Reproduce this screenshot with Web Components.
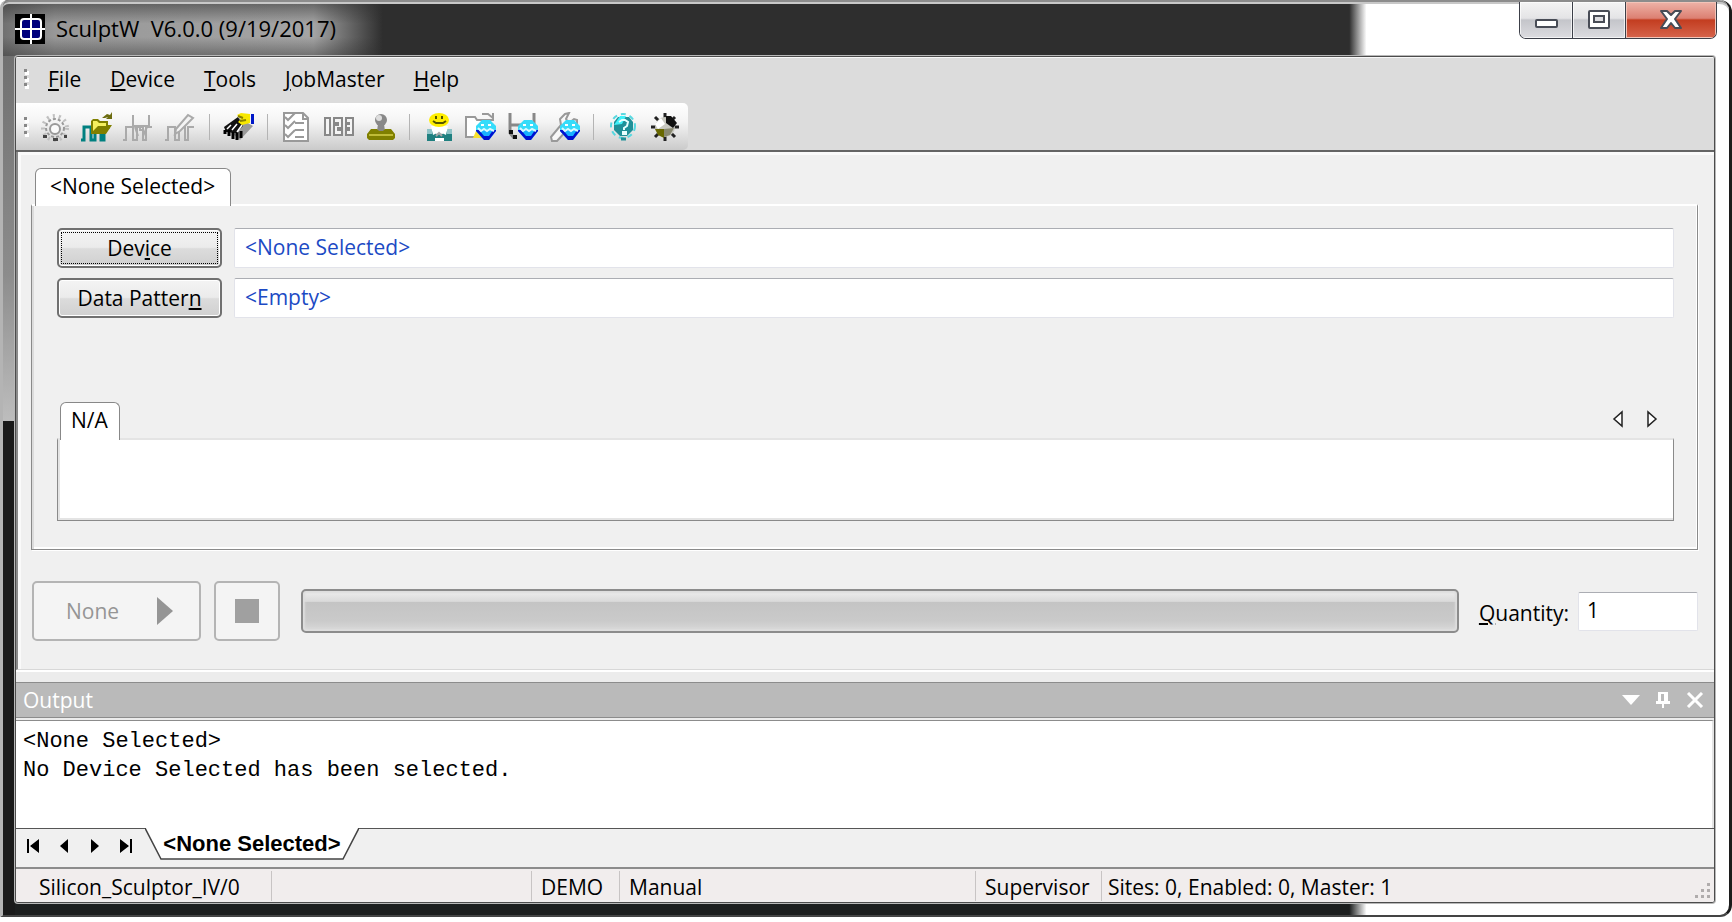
<!DOCTYPE html>
<html lang="en">
<head>
<meta charset="utf-8">
<title>SculptW</title>
<style>
	body {
		margin: 0;
		background: #fff;
		color: #000;
		font: 21px/28px "Open Sans", "Noto Sans", sans-serif;
	}
</style>
</head>
<body>

<template id="app-window-template">
	<style>
		:host {
			box-sizing: border-box;
			display: flex;
			flex-direction: column;
			min-height: calc(100vh - 5px);
			border-left: 3px solid #b4b4b4;
			border-right: 3px solid #1c1c1c;
			border-bottom: 2px solid #444;
			border-radius: 8px 12px 12px 0;
			background:
				linear-gradient(180deg, #6a6a6a, #8c8c8c 30%, #bdbdbd 46%, #1a1a1a 46%) 0 0 / 12px 100% no-repeat,
				linear-gradient(90deg, #1c1e1e 78%, #fff 79%);
		}
		.client {
			flex: 1;
			display: flex;
			flex-direction: column;
			margin: 0 14px 12px 12px;
			border: 1px solid #4c4c4c;
			border-radius: 3px;
			box-shadow: 0 0 0 1px #b8b8b8;
			background: #f0f0f0;
			overflow: hidden;
		}
	</style>
	<slot name="title"></slot>
	<div class="client"><slot></slot></div>
</template>

<template id="title-bar-template">
	<style>
		:host {
			display: flex;
			align-items: flex-start;
			height: 56px;
			box-sizing: border-box;
			padding: 0 12px;
			border-top: 2px solid #8c8c8c;
			border-radius: 6px 10px 0 0;
			box-shadow: inset 0 2px #c8c8c8;
			font-size: 22px;
			background:
				linear-gradient(180deg, #2e2e2e90, transparent 40%, transparent 65%, #2e2e2e70) 0 0 / 380px 100% no-repeat,
				linear-gradient(90deg, #707070, #989898 3%, #a4a4a4 18%, #2e2e2e 22%, #2e2e2e 78%, #fff 79%);
		}
		.logo {
			margin: 12px 11px 0 0;
		}
		h1 {
			flex: 1;
			margin: 10px 0 0;
			font: inherit;
			line-height: 32px;
			white-space: pre;
		}
		.controls {
			display: flex;
			height: 36px;
			border: 1px solid #3c3f48;
			border-top: 0;
			border-radius: 0 0 7px 7px;
			overflow: hidden;
		}
		button {
			display: grid;
			place-items: center;
			width: 53px;
			padding: 0;
			border: 0;
			border-right: 1px solid #3c3f48;
			background: linear-gradient(#f4f4f4, #e4e4e6 45%, #c4c5ca 50%, #dcdce0);
			box-shadow: inset 0 0 0 1px #ffffffb0;
		}
		.close {
			width: 90px;
			border-right: 0;
			background: linear-gradient(#eeb3a8, #dc8072 45%, #c33d20 50%, #d6644c);
			box-shadow: inset 0 0 0 1px #f3c4b8;
		}
	</style>
	<svg class="logo" width="30" height="30" viewBox="0 0 30 30" aria-hidden="true">
		<path fill="#000" d="M0 0h30v30H0z"/>
		<rect x="6" y="5" width="20" height="20" rx="3" fill="#00007c" stroke="#fff" stroke-width="2"/>
		<path stroke="#fff" stroke-width="2" d="M16 0v30M0 15h30"/>
	</svg>
	<h1><slot></slot></h1>
	<div class="controls">
		<button aria-label="Minimize"><svg width="26" height="26"><rect x="3" y="13" width="21" height="7" rx="1" fill="#fff" stroke="#484c56" stroke-width="2"/></svg></button>
		<button aria-label="Maximize"><svg width="26" height="26"><rect x="3" y="4" width="20" height="17" rx="1" fill="#fff" stroke="#484c56" stroke-width="2"/><rect x="8" y="9" width="10" height="6" fill="#dcdce0" stroke="#484c56" stroke-width="2"/></svg></button>
		<button class="close" aria-label="Close"><svg width="26" height="26"><path d="M3 4h6l4 4 4-4h6l-6 8 6 9h-6l-4-5-4 5H3l6-9z" fill="#fff" stroke="#484c56" stroke-width="2" stroke-linejoin="round"/></svg></button>
	</div>
</template>

<template id="menu-bar-template">
	<style>
		:host {
			display: block;
			background: #dcdcdc;
			border-top: 1px solid #f8f8f8;
		}
		nav {
			box-sizing: border-box;
			display: flex;
			align-items: center;
			height: 45px;
			padding: 0 0 4px 7px;
		}
		.grip {
			margin-right: 5px;
		}
		::slotted(a) {
			padding: 4px 15px 4px 14px;
			color: #000;
			text-decoration: none;
		}
	</style>
	<nav>
		<svg class="grip" width="6" height="22" aria-hidden="true"><path d="M2 3h4v4H2zM2 10h4v4H2zM2 17h4v4H2z" fill="#fff"/><path d="M1 1h3v3H1zM1 8h3v3H1zM1 15h3v3H1z" fill="#888"/></svg>
		<slot></slot>
	</nav>
</template>

<template id="tool-bar-template">
	<style>
		:host {
			display: flex;
			background: #dcdcdc;
			border-bottom: 2px solid #646464;
		}
		.band {
			display: flex;
			align-items: center;
			height: 47px;
			padding: 0 2px 0 7px;
			border-radius: 0 5px 5px 0;
			background: linear-gradient(#fff, #f4f4f4 40%, #cacaca);
		}
		.grip {
			margin-right: 5px;
		}
	</style>
	<div class="band" role="toolbar">
		<svg class="grip" width="6" height="22" aria-hidden="true"><path d="M2 3h4v4H2zM2 10h4v4H2zM2 17h4v4H2z" fill="#fff"/><path d="M1 1h3v3H1zM1 8h3v3H1zM1 15h3v3H1z" fill="#888"/></svg>
		<slot></slot>
	</div>
</template>

<template id="tool-button-template">
	<style>
		:host {
			display: block;
		}
		button {
			display: grid;
			place-items: center;
			width: 42px;
			height: 40px;
			padding: 0;
			border: 0;
			background: none;
		}
	</style>
	<button></button>
</template>

<template id="tool-separator-template">
	<style>
		:host {
			width: 1px;
			height: 26px;
			margin: 0 8px 0 7px;
			background: #b4b4b4;
		}
	</style>
</template>

<template id="tab-panel-template">
	<style>
		:host {
			display: block;
			--fill: #f0f0f0;
		}
		:host([plain]) {
			--fill: #fff;
		}
		header {
			display: flex;
			align-items: center;
			justify-content: space-between;
			padding: 0 5px 0 4px;
		}
		button {
			position: relative;
			height: 38px;
			margin-bottom: -2px;
			padding: 0 15px 4px 14px;
			border: 1px solid #888;
			border-bottom: 0;
			border-radius: 6px 6px 0 0;
			background: #fff;
			color: #000;
			font: inherit;
			white-space: nowrap;
		}
		:host([plain]) header {
			padding-left: 3px;
		}
		:host([plain]) button {
			padding: 0 11px 4px 10px;
		}
		section {
			border: 1px solid #8a8a8a;
			border-top: 2px solid #fff;
			box-shadow: inset 2px 0 #dcdcdc, inset -1px -2px #fff, 1px 1px #fff;
			background: var(--fill);
			padding: 22px 23px 28px 25px;
		}
		:host([plain]) section {
			min-height: 80px;
			padding: 0;
			border-top-color: #e4e4e4;
			box-shadow: inset 2px -2px #e4e4e4;
		}
	</style>
	<header role="tablist">
		<button role="tab" aria-selected="true"></button>
		<slot name="actions"></slot>
	</header>
	<section role="tabpanel"><slot></slot></section>
</template>

<template id="picker-row-template">
	<style>
		:host {
			display: flex;
			gap: 12px;
			margin-bottom: 10px;
		}
		button {
			width: 165px;
			height: 40px;
			padding: 2px;
			border: 2px solid #707070;
			border-radius: 5px;
			background: linear-gradient(#f4f4f4, #ebebeb 48%, #dcdcdc 52%, #d0d0d0);
			box-shadow: inset 0 0 0 1px #fff;
			color: #000;
			font: inherit;
		}
		span {
			display: block;
			line-height: 30px;
			border: 1px solid transparent;
		}
		:host([focused]) span {
			border: 1px dotted #000;
		}
		input {
			flex: 1;
			min-width: 0;
			padding: 0 10px 3px;
			border: 1px solid #e2e3ea;
			border-top-color: #abadb3;
			border-radius: 2px;
			background: #fff;
			color: #1c4ac4;
			font: inherit;
		}
	</style>
	<button id="pick"><span><slot></slot></span></button>
	<input aria-labelledby="pick" readonly>
</template>

<template id="tab-scroller-template">
	<style>
		:host {
			display: flex;
		}
		button {
			width: 34px;
			height: 30px;
			padding: 0;
			border: 0;
			background: none;
		}
	</style>
	<button aria-label="Scroll left"><svg width="12" height="18"><path d="M10 2v14L2 9z" fill="#fff" stroke="#222" stroke-width="1.5"/></svg></button>
	<button aria-label="Scroll right"><svg width="12" height="18"><path d="M2 2v14l8-7z" fill="#fff" stroke="#222" stroke-width="1.5"/></svg></button>
</template>

<template id="run-controls-template">
	<style>
		:host {
			display: flex;
			align-items: center;
			margin: 31px 0 28px 1px;
		}
		button {
			display: flex;
			align-items: center;
			justify-content: center;
			height: 60px;
			padding: 0;
			border: 2px solid #b4b4b4;
			border-radius: 5px;
			background: #f4f4f4;
			color: #959595;
			font: inherit;
		}
		.run {
			width: 169px;
			gap: 38px;
			padding-left: 6px;
		}
		.stop {
			width: 66px;
			margin: 0 21px 0 13px;
		}
		.meter {
			flex: 1;
			box-sizing: border-box;
			height: 44px;
			border: 2px solid #8c8c8c;
			border-radius: 5px;
			background: linear-gradient(#eeeeee, #dadada 26%, #c4c4c4 28%, #cacaca 75%, #dadada);
			box-shadow: inset 0 0 2px 2px #dedede;
		}
		label {
			margin: 4px 9px 0 20px;
		}
		input {
			box-sizing: border-box;
			width: 120px;
			height: 39px;
			padding: 0 8px 3px;
			border: 1px solid #e2e3ea;
			border-top-color: #abadb3;
			border-radius: 2px;
			background: #fff;
			color: #000;
			font: inherit;
		}
	</style>
	<button class="run" disabled>None <svg width="16" height="28" aria-hidden="true"><path d="M0 0l16 14L0 28z" fill="#959595"/></svg></button>
	<button class="stop" aria-label="Stop" disabled><svg width="24" height="24"><path d="M0 0h24v24H0z" fill="#a0a0a0"/></svg></button>
	<div class="meter" role="progressbar" aria-label="Progress" aria-valuenow="0"></div>
	<label for="quantity"><u>Q</u>uantity:</label>
	<input id="quantity" value="1">
</template>

<template id="output-pane-template">
	<style>
		:host {
			flex: 1;
			display: flex;
			flex-direction: column;
			border-top: 2px solid #fff;
			padding-top: 10px;
			background: #ececec;
		}
		header {
			display: flex;
			align-items: center;
			height: 34px;
			padding: 0 3px 0 7px;
			border-top: 1px solid #8c8c8c;
			border-bottom: 1px solid #8c8c8c;
			background: #bababa;
			color: #fff;
		}
		h2 {
			flex: 1;
			margin: 0;
			font: inherit;
		}
		button {
			display: grid;
			place-items: center;
			width: 32px;
			height: 30px;
			padding: 0;
			border: 0;
			background: none;
			color: inherit;
		}
		pre {
			flex: 1;
			margin: 2px 0 0;
			padding: 6px 7px 9px;
			border-top: 1px solid #8c8c8c;
			border-right: 2px solid #e4e4e4;
			background: #fff;
			font: 22px/29px "Liberation Mono", monospace;
		}
		.sheets {
			display: flex;
			height: 39px;
			padding-left: 1px;
			background: linear-gradient(#555, #555) 0 0 / 100% 1px no-repeat, #f0f0f0;
		}
		.sheets button {
			width: 31px;
			height: 36px;
			color: #000;
		}
		.sheet {
			display: grid;
			width: 214px;
			margin-left: 4px;
		}
		.sheet svg, .sheet button {
			grid-area: 1 / 1;
		}
		.sheet button {
			width: 100%;
			height: 32px;
			padding-bottom: 1px;
			font: bold 22px/28px "Liberation Sans", sans-serif;
			white-space: nowrap;
		}
	</style>
	<header>
		<h2>Output</h2>
		<button aria-label="Window position"><svg width="18" height="10"><path d="M0 0h18L9 10z" fill="currentColor"/></svg></button>
		<button aria-label="Auto hide"><svg width="14" height="16"><path d="M2 0h10v9h2v3H8v4H6v-4H0V9h2zM5 2v7h3V2z" fill="currentColor" fill-rule="evenodd"/></svg></button>
		<button aria-label="Close output"><svg width="18" height="16"><path d="M2 1l14 14M16 1L2 15" stroke="currentColor" stroke-width="3"/></svg></button>
	</header>
	<pre><slot></slot></pre>
	<div class="sheets">
		<button aria-label="First sheet"><svg width="14" height="14"><path d="M1 0h2v14H1zM13 0v14L4 7z"/></svg></button>
		<button aria-label="Previous sheet"><svg width="14" height="14"><path d="M11 0v14L3 7z"/></svg></button>
		<button aria-label="Next sheet"><svg width="14" height="14"><path d="M3 0v14l8-7z"/></svg></button>
		<button aria-label="Last sheet"><svg width="14" height="14"><path d="M11 0h2v14h-2zM1 0v14l9-7z"/></svg></button>
		<div class="sheet">
			<svg width="214" height="32" aria-hidden="true"><path d="M0 0l16 31h182L214 0z" fill="#fff"/><path d="M0 0l16 31h182L214 0" fill="none" stroke="#444" stroke-width="1.5"/></svg>
			<button>&lt;None Selected&gt;</button>
		</div>
	</div>
</template>

<template id="status-bar-template">
	<style>
		:host {
			display: flex;
			align-items: center;
			height: 33px;
			border-top: 2px solid #8c8c8c;
			background: #f1eded;
		}
		slot {
			flex: 1;
			display: grid;
			grid-template-columns: 256px 260px 88px 356px 126px 1fr;
		}
		::slotted(span) {
			height: 30px;
			line-height: 32px;
			padding-left: 9px;
			border-right: 1px solid #c8c4c4;
			white-space: nowrap;
		}
		::slotted(:first-child) {
			padding-left: 23px;
		}
		::slotted(:last-child) {
			padding-left: 6px;
			border-right: 0;
		}
		svg {
			align-self: flex-end;
			margin: 0 3px 3px 0;
		}
	</style>
	<slot></slot>
	<svg width="16" height="16" aria-hidden="true"><path d="M12 0h3v3h-3zM12 6h3v3h-3zM6 6h3v3H6zM12 12h3v3h-3zM6 12h3v3H6zM0 12h3v3H0z" fill="#b0acac"/></svg>
</template>

<app-window>
	<title-bar slot="title">SculptW  V6.0.0 (9/19/2017)</title-bar>
	<menu-bar>
		<a href="#file"><u>F</u>ile</a>
		<a href="#device"><u>D</u>evice</a>
		<a href="#tools"><u>T</u>ools</a>
		<a href="#jobmaster"><u>J</u>obMaster</a>
		<a href="#help"><u>H</u>elp</a>
	</menu-bar>
	<tool-bar>
		<tool-button icon="gear" label="Configure"></tool-button>
		<tool-button icon="load" label="Load pattern"></tool-button>
		<tool-button icon="save" label="Save pattern"></tool-button>
		<tool-button icon="edit" label="Edit pattern"></tool-button>
		<tool-separator></tool-separator>
		<tool-button icon="chip" label="Select device"></tool-button>
		<tool-separator></tool-separator>
		<tool-button icon="list" label="Checklist"></tool-button>
		<tool-button icon="serial" label="Serialize"></tool-button>
		<tool-button icon="stamp" label="Stamp"></tool-button>
		<tool-separator></tool-separator>
		<tool-button icon="operator" label="Operator"></tool-button>
		<tool-button icon="jobopen" label="Open job"></tool-button>
		<tool-button icon="jobsave" label="Save job"></tool-button>
		<tool-button icon="jobtool" label="Job tools"></tool-button>
		<tool-separator></tool-separator>
		<tool-button icon="help" label="Help"></tool-button>
		<tool-button icon="about" label="About"></tool-button>
	</tool-bar>
	<main-pane>
		<tab-panel label="&lt;None Selected&gt;">
			<picker-row value="&lt;None Selected&gt;" focused>Dev<u>i</u>ce</picker-row>
			<picker-row value="&lt;Empty&gt;">Data Patter<u>n</u></picker-row>
			<site-area>
				<tab-panel label="N/A" plain>
					<tab-scroller slot="actions"></tab-scroller>
				</tab-panel>
			</site-area>
		</tab-panel>
		<run-controls></run-controls>
	</main-pane>
	<output-pane>&lt;None Selected&gt;
No Device Selected has been selected.</output-pane>
	<status-bar>
		<span>Silicon_Sculptor_IV/0</span>
		<span></span>
		<span>DEMO</span>
		<span>Manual</span>
		<span>Supervisor</span>
		<span>Sites: 0, Enabled: 0, Master: 1</span>
	</status-bar>
</app-window>

<script>
	'use strict';

	// Square wave shared by the pattern buttons
	const WAVE = 'M0 28H3V15H10V28H14V15H20V28H23V15H29';
	// Round blue badge shared by the job buttons
	const BADGE = '<path d="M17 8h8l6 6v5l-7 9h-5l-8-9v-5z" fill="#35dcfa"/><path d="M11 18h20v1l-7 9h-5l-8-9z" fill="#0010d0"/><path d="M14 18h14l-4 6h-5z" fill="#18b0ff"/><path d="M13 16l3 3 3-2 3 2 3-2 4 2" fill="none" stroke="#d8faff" stroke-width="2"/><path d="M16 13h3M23 13h3" stroke="#fff" stroke-width="2"/>';

	const ICONS = {
		gear: '<circle cx="16" cy="16" r="12" fill="none" stroke="#c0c0c0" stroke-width="4" stroke-dasharray="2 4"/><circle cx="16" cy="16" r="9" fill="none" stroke="#999" stroke-width="2" stroke-dasharray="3 2"/><circle cx="16" cy="17" r="5" fill="#fafafa" stroke="#999" stroke-width="2"/><path d="M4 23h4v3H4zM14 26h5v3h-5zM25 23h3v3h-3z" fill="#444"/>',
		load: `<path d="${WAVE}" fill="none" stroke="#008080" stroke-width="3"/><path d="M10 9l2-2h5l2 2h8v4h4l-6 9H10z" fill="#808000"/><path d="M12 9h4l2 2h7v3h-8l-5 5z" fill="#f4f060"/><path d="M21 6l5-4 3 1 2-3v7h-6l2-2-3 1z" fill="#6c6c10"/>`,
		save: `<path d="${WAVE}" fill="none" stroke="#aaa" stroke-width="2"/><path d="M10 3v11h16V3M12 15l3 9M24 15l-4 9M17 14v4h4" fill="none" stroke="#aaa" stroke-width="2"/>`,
		edit: `<path d="${WAVE}" fill="none" stroke="#aaa" stroke-width="2"/><path d="M11 17L23 3l5 3-13 13-5 3z" fill="#f4f4f4" stroke="#aaa" stroke-width="2"/>`,
		chip: '<path d="M4 17L16 6l14 8-13 14z" fill="#999"/><path d="M1 15L15 5l5 9-7 7-10-1z" fill="#111"/><path d="M2 18v4M6 18v6M10 20v7M14 20v8M18 19v7" stroke="#000" stroke-width="3"/><path d="M4 17l4-4M9 18l5-6M14 20l5-7" stroke="#fff" stroke-width="1.5"/><path d="M14 3l4-2 9 1v9l-8 2-4-3 3-3z" fill="#f8e800"/><path d="M15 4l5 2M17 9l6-1" stroke="#8a8200" stroke-width="2"/><path d="M28 2h3v10h-3z" fill="#0018c8"/>',
		list: '<path d="M3 1h19l5 5v23H3z" fill="#fff" stroke="#999" stroke-width="2"/><path d="M22 1v6h5" fill="none" stroke="#999" stroke-width="2"/><path d="M4 5l3 3 7-7M4 13l3 3 7-7M4 22l3 3 7-7" fill="none" stroke="#999" stroke-width="2"/><path d="M14 11h9M14 18h9M14 25h9" stroke="#999" stroke-width="2"/>',
		serial: '<path d="M2 6h5v17H2zM11 6h8v10h-4v2h4v5h-8V13h4v-2h-4zM23 6h7v17h-7v-5h3v-2h-3v-4h3v-1h-3z" fill="#f4f4f4" stroke="#888" stroke-width="2"/>',
		stamp: '<path d="M13 12h6l1 7h-8z" fill="#888"/><circle cx="16" cy="8" r="6" fill="#888"/><circle cx="14" cy="6" r="3" fill="#ddd"/><path d="M6 17h6l2 2h4l2-2h6l4 5v4l-2 2H4l-2-2v-4z" fill="#808000"/><path d="M4 23h24" stroke="#c0bc38" stroke-width="2"/>',
		operator: '<path d="M4 17h6l3 5h7l3-5h6v12H4z" fill="#208080"/><path d="M4 17h5v5H4zM24 17h5v5h-5z" fill="#90c4c8"/><path d="M8 14h17l-2 9-4-2h-5l-4 2zM12 26h9v3h-9z" fill="#fff"/><path d="M13 24l3-3 3 3" fill="none" stroke="#a8a8a8" stroke-width="2"/><ellipse cx="16" cy="8" rx="10" ry="7" fill="#ffee00"/><path d="M13 4v3M19 4v3M10 9l3 2h7l3-2" fill="none" stroke="#555500" stroke-width="2"/>',
		jobopen: '<path d="M1 5h9l2 3h9v17H1z" fill="#fff" stroke="#999" stroke-width="2"/><path d="M8 26l6-14h6v14z" fill="#f8e030"/><path d="M17 2h6l5 4M28 1v7h-6" fill="none" stroke="#999" stroke-width="2"/>' + BADGE,
		jobsave: '<path d="M3 1v20l4 5M27 1v12M3 13h13" fill="none" stroke="#888" stroke-width="3"/><path d="M2 18h4v4H2zM6 23h4v4H6z" fill="#111"/>' + BADGE,
		jobtool: '<path d="M2 25l10-12-1-6 5-5 4-1-3 6 3 4 5-4 3 1v6l-5 4h-5L8 29H3z" fill="#f8f8f8" stroke="#999" stroke-width="2"/>' + BADGE,
		help: '<circle cx="16" cy="14" r="12" fill="none" stroke="#58d8e0" stroke-width="2" stroke-dasharray="5 4"/><path d="M11 5h11l4 5v8l-6 6h-7l-6-6v-8z" fill="#209098"/><path d="M7 13l6-9h6l-4 8z" fill="#40f0f8"/><path d="M12 10l3-2h3l3 2-1 4-3 2v2M16 20h3v2h-3z" fill="none" stroke="#e8ffff" stroke-width="2"/><path d="M14 27h5" stroke="#209098" stroke-width="3"/>',
		about: '<path d="M16 1v28M2 15h28M6 5l20 20M26 5L6 25" stroke="#222" stroke-width="3"/><circle cx="16" cy="15" r="10" fill="#c8c8c0"/><path d="M17 4h5l6 7-4 5-7-5z" fill="#111"/><path d="M6 17h9v9l-6-3z" fill="#686800"/><path d="M6 12l6-6 4 6-7 5z" fill="#fff"/><path d="M15 17l10-1-4 7-6 2z" fill="#888870"/>'
	};

	class BaseElement extends HTMLElement {
		constructor() {
			super();
			this.attachShadow({mode: 'open'});
			const template = document.getElementById(`${this.localName}-template`).content;
			this.shadowRoot.appendChild(template.cloneNode(true));
		}
	}

	class ToolButton extends BaseElement {
		connectedCallback() {
			const button = this.shadowRoot.querySelector('button');
			button.setAttribute('aria-label', this.getAttribute('label'));
			button.innerHTML = `<svg width="32" height="30" viewBox="0 0 32 30">${ICONS[this.getAttribute('icon')]}</svg>`;
		}
	}

	class TabPanel extends BaseElement {
		connectedCallback() {
			this.shadowRoot.querySelector('button').textContent = this.getAttribute('label');
		}
	}

	class PickerRow extends BaseElement {
		connectedCallback() {
			this.shadowRoot.querySelector('input').value = this.getAttribute('value');
		}
	}

	class MainPane extends HTMLElement {
		constructor() {
			super();
			this.attachShadow({mode: 'open'}).innerHTML = `
				<style>
					:host {
						display: block;
						padding: 16px 16px 0 13px;
						border-left: 2px solid #8a8a8a;
						border-bottom: 1px solid #d8d8d8;
						box-shadow: inset 3px 3px #fafafa;
						background: #f0f0f0;
					}
				</style>
				<slot></slot>`;
		}
	}

	class SiteArea extends HTMLElement {
		constructor() {
			super();
			this.attachShadow({mode: 'open'}).innerHTML = `
				<style>
					:host {
						display: block;
						padding-top: 74px;
					}
				</style>
				<slot></slot>`;
		}
	}

	customElements.define('tool-button', ToolButton);
	customElements.define('tab-panel', TabPanel);
	customElements.define('picker-row', PickerRow);
	customElements.define('main-pane', MainPane);
	customElements.define('site-area', SiteArea);
	for (const name of ['app-window', 'title-bar', 'menu-bar', 'tool-bar', 'tool-separator', 'tab-scroller', 'run-controls', 'output-pane', 'status-bar']) {
		customElements.define(name, class extends BaseElement {});
	}
</script>
</body>
</html>
